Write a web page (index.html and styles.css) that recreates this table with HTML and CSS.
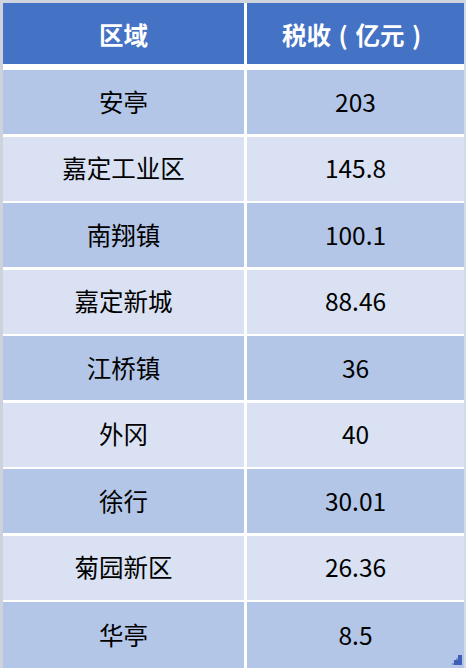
FILE: index.html
```html
<!DOCTYPE html>
<html lang="zh">
<head>
<meta charset="utf-8">
<link rel="stylesheet" href="styles.css">
</head>
<body>
<div class="frame">
  <div class="table">
    <div class="cell head">区域</div>
    <div class="cell head">税收<span class="fw">(</span>亿元<span class="fw">)</span></div>
    <div class="cell odd">安亭</div><div class="cell odd">203</div>
    <div class="cell even">嘉定工业区</div><div class="cell even">145.8</div>
    <div class="cell odd">南翔镇</div><div class="cell odd">100.1</div>
    <div class="cell even">嘉定新城</div><div class="cell even">88.46</div>
    <div class="cell odd">江桥镇</div><div class="cell odd">36</div>
    <div class="cell even">外冈</div><div class="cell even">40</div>
    <div class="cell odd">徐行</div><div class="cell odd">30.01</div>
    <div class="cell even">菊园新区</div><div class="cell even">26.36</div>
    <div class="cell odd last">华亭</div><div class="cell odd last">8.5</div>
  </div>
  <svg class="handle" width="10" height="10" viewBox="0 0 10 10">
    <rect x="6" y="0" width="4" height="10" fill="#3f5fb5"/>
    <rect x="2" y="5" width="8" height="5" fill="#3f5fb5"/>
    <rect x="0" y="8" width="2" height="2" fill="#7d93cf"/>
    <rect x="4" y="3" width="2" height="2" fill="#7d93cf"/>
  </svg>
</div>
</body>
</html>
```
FILE: styles.css
```css
html, body {
  margin: 0;
  padding: 0;
  background: #ffffff;
}
.frame {
  position: relative;
  width: 466px;
  height: 668px;
  box-sizing: border-box;
  border-left: 3px solid #cdd2dc;
  border-top: 3px solid #cfd4de;
  border-right: 2px solid #d3dbea;
  overflow: hidden;
}
.table {
  display: grid;
  grid-template-columns: 241px 217px;
  grid-template-rows: 64.5px repeat(8, 64px) 1fr;
  column-gap: 3px;
  row-gap: 2.5px;
  height: 100%;
  font-family: "Noto Sans CJK SC", "Open Sans", sans-serif;
  font-size: 24.5px;
}
.cell {
  display: flex;
  align-items: center;
  justify-content: center;
  color: #000000;
  line-height: 1;
}
.head {
  background: #4472c4;
  color: #ffffff;
  font-weight: 700;
  padding-top: 3px;
  margin-bottom: 3.5px;
  box-sizing: border-box;
}
.fw {
  display: inline-block;
  width: 1em;
  text-align: center;
}
.odd {
  background: #b4c6e7;
}
.even {
  background: #d9e1f2;
}
.handle {
  position: absolute;
  right: 2px;
  bottom: 3px;
}
```
